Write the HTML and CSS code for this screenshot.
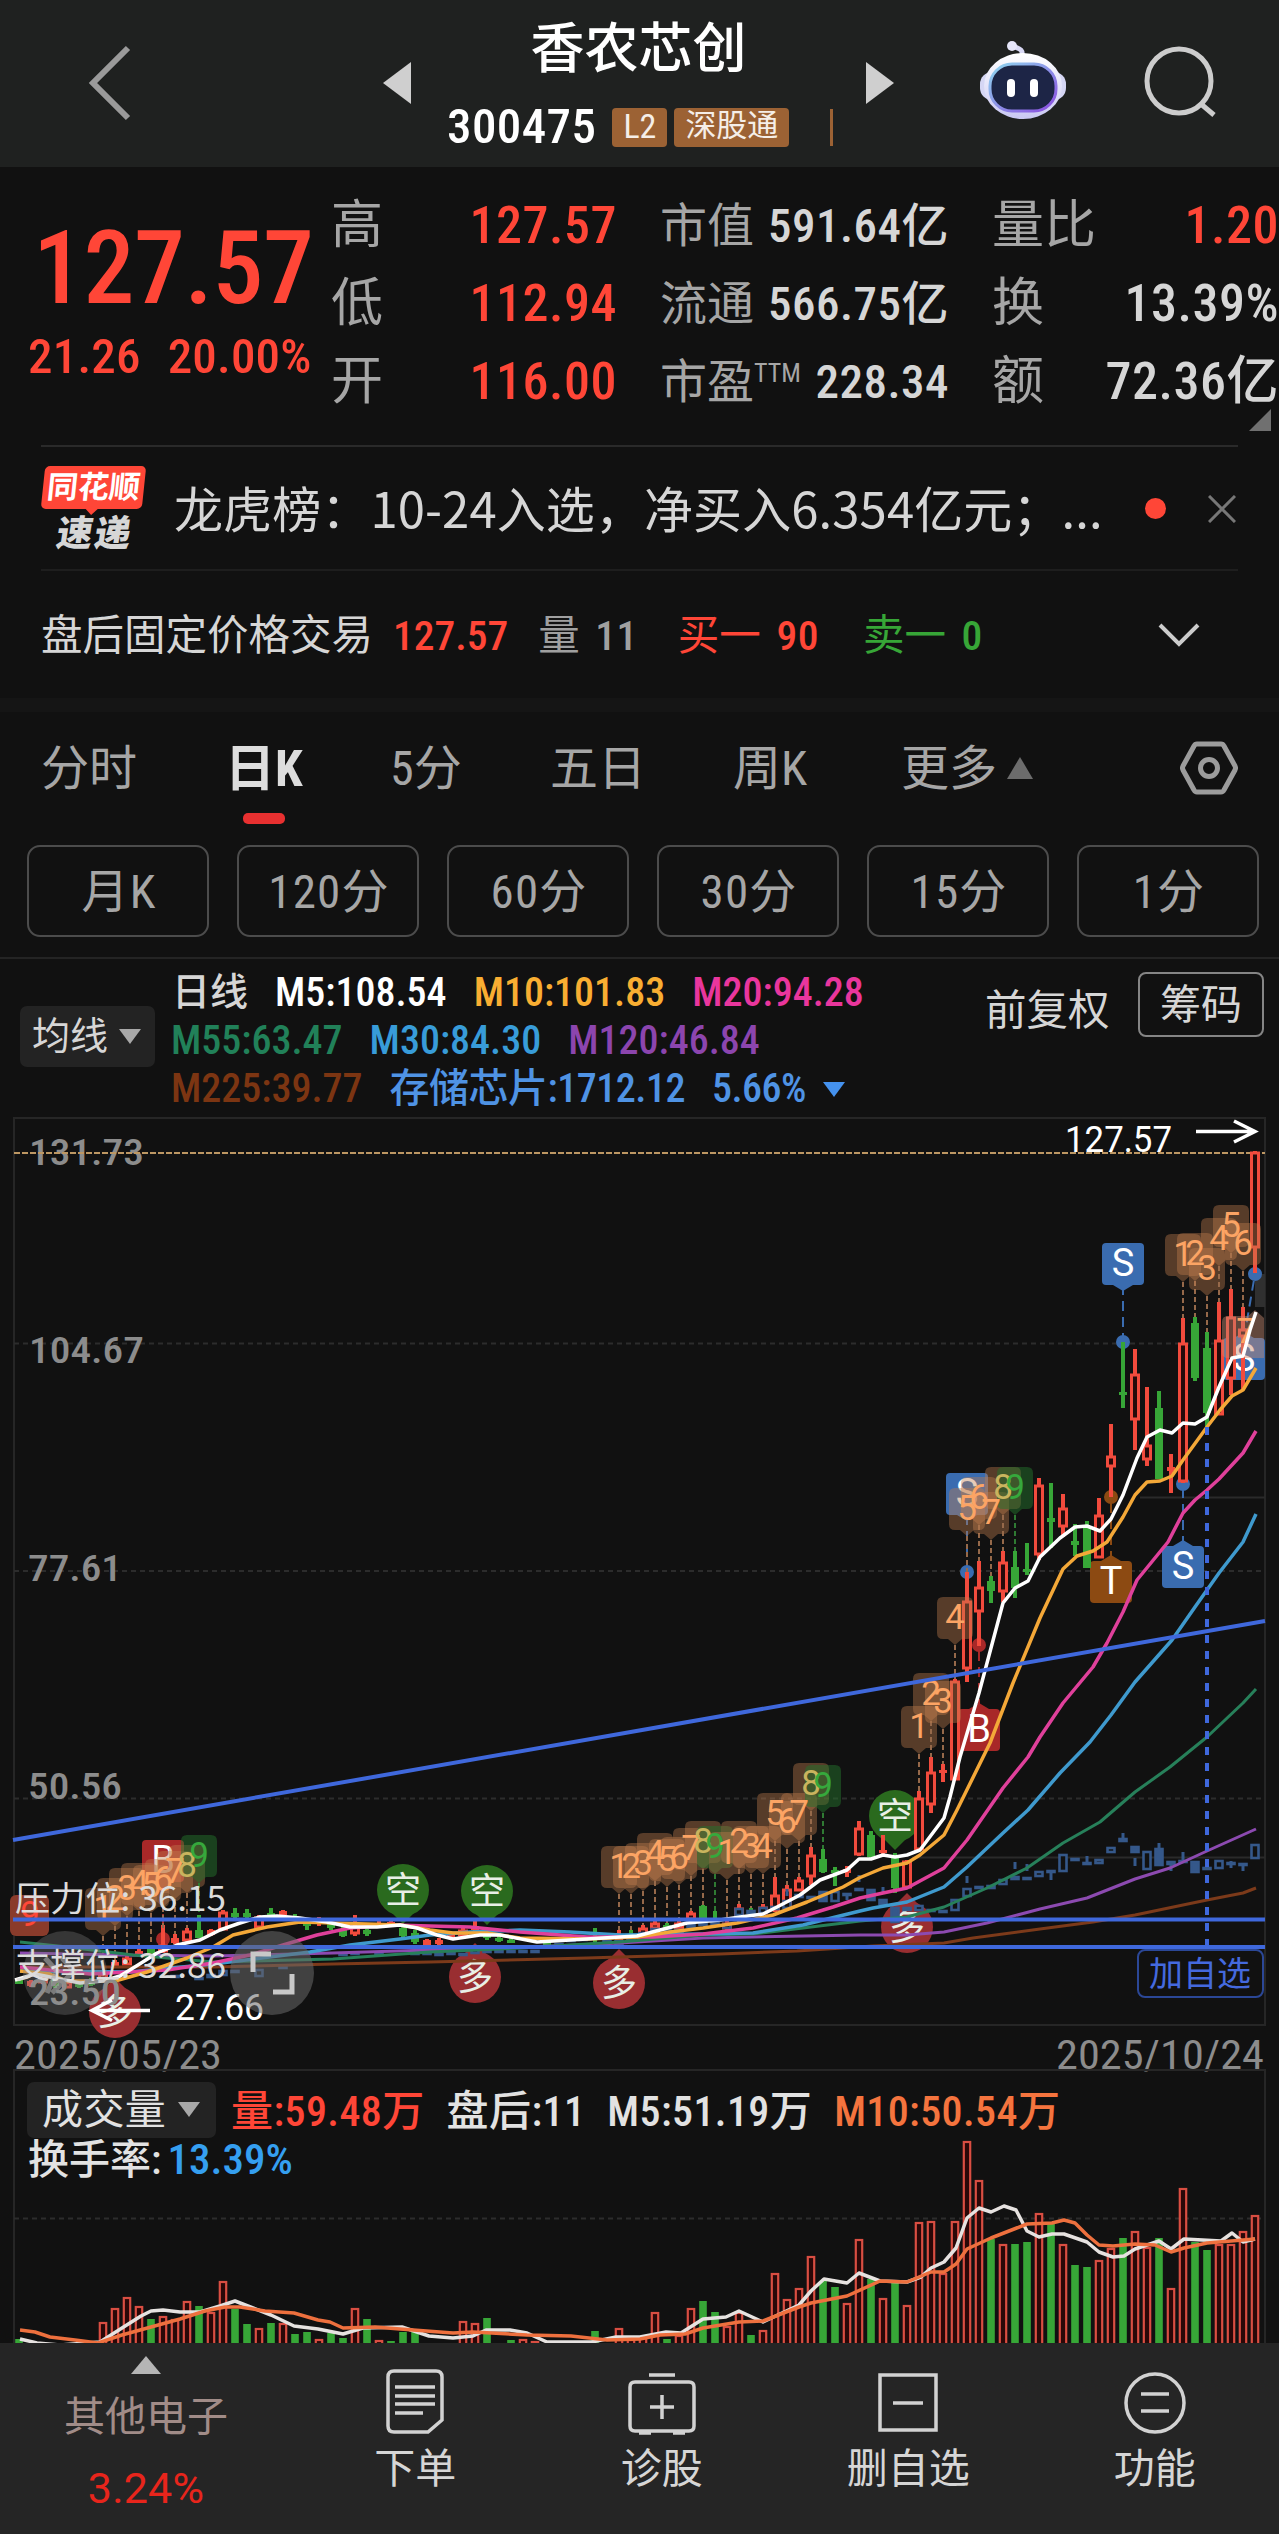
FILE: index.html
```html
<!DOCTYPE html>
<html lang="zh-CN">
<head>
    <meta charset="UTF-8">
    <meta name="viewport" content="width=device-width, initial-scale=1.0">
    <title>香农芯创 300475</title>
    <link rel="stylesheet" href="styles.css">
</head>
<body>
    <header class="topbar">
        <svg class="back" width="44" height="76" viewBox="0 0 44 76"><path d="M40 3 5 38l35 35"/></svg>
        <svg class="arrow" width="28" height="42" viewBox="0 0 28 42"><path d="M28 0v42L0 21z"/></svg>
        <div class="stock">
            <h1>香农芯创</h1>
            <div class="code-row">
                <span class="code">300475</span>
                <span class="tag">L2</span>
                <span class="tag tag-wide">深股通</span>
                <span class="tag-cut"></span>
            </div>
        </div>
        <svg class="arrow arrow-right" width="28" height="42" viewBox="0 0 28 42"><path d="M0 0v42l28-21z"/></svg>
        <svg class="robot" width="86" height="80" viewBox="0 0 86 80">
            <defs>
                <linearGradient id="shell" x1="0" y1="0" x2="0" y2="1">
                    <stop offset="0" stop-color="#ffffff"/>
                    <stop offset="1" stop-color="#c9c8f3"/>
                </linearGradient>
                <linearGradient id="rim" x1="0" y1="0" x2="1" y2="1">
                    <stop offset="0" stop-color="#8fd8f0"/>
                    <stop offset="1" stop-color="#8a4be0"/>
                </linearGradient>
            </defs>
            <path d="M42 14c1-6-3-6-9-9" fill="none" stroke="#d9d9f5" stroke-width="5" stroke-linecap="round"/>
            <circle cx="32" cy="5" r="5" fill="#e6e6fa"/>
            <rect x="0" y="31" width="86" height="28" rx="12" fill="#d5d6f4"/>
            <ellipse cx="43" cy="45" rx="39" ry="33" fill="url(#shell)"/>
            <rect x="10" y="23" width="66" height="47" rx="22" fill="#1d2546" stroke="url(#rim)" stroke-width="3"/>
            <rect x="27" y="38" width="8" height="18" rx="4" fill="#fff"/>
            <rect x="50" y="38" width="8" height="18" rx="4" fill="#fff"/>
        </svg>
        <svg class="search" width="74" height="74" viewBox="0 0 74 74"><circle cx="35" cy="35" r="32"/><path d="m57 58 13 11"/></svg>
    </header>

    <section class="quote">
        <div class="price">
            <div class="last">127.57</div>
            <div class="change"><span>21.26</span><span>20.00%</span></div>
        </div>
        <dl class="col col-a">
            <dt>高</dt><dd class="up">127.57</dd>
            <dt>低</dt><dd class="up">112.94</dd>
            <dt>开</dt><dd class="up">116.00</dd>
        </dl>
        <dl class="col col-b">
            <dt>市值</dt><dd>591.64亿</dd>
            <dt>流通</dt><dd>566.75亿</dd>
            <dt>市盈<sup>TTM</sup></dt><dd>228.34</dd>
        </dl>
        <dl class="col col-c">
            <dt>量比</dt><dd class="up">1.20</dd>
            <dt>换</dt><dd>13.39%</dd>
            <dt>额</dt><dd>72.36亿</dd>
        </dl>
        <i class="corner"></i>
    </section>

    <section class="news">
        <div class="brand">
            <span class="bubble"><b>同花顺</b></span>
            <em>速递</em>
        </div>
        <p>龙虎榜：10-24入选，净买入6.354亿元；...</p>
        <i class="dot"></i>
        <svg class="close" width="28" height="28" viewBox="0 0 28 28"><path d="m1 1 26 26M27 1 1 27"/></svg>
    </section>

    <section class="after">
        <span class="after-name">盘后固定价格交易</span>
        <span class="up after-price">127.57</span>
        <span class="muted">量 <b>11</b></span>
        <span class="up">买一 <b>90</b></span>
        <span class="down">卖一 <b>0</b></span>
        <svg class="chevron" width="42" height="26" viewBox="0 0 42 26"><path d="m2 3 19 19L40 3"/></svg>
    </section>

    <nav class="tabs">
        <span class="t1">分时</span>
        <span class="t2 active">日K</span>
        <span class="t3">5分</span>
        <span class="t4">五日</span>
        <span class="t5">周K</span>
        <span class="t6">更多<i class="more"></i></span>
        <svg class="gear" width="58" height="54" viewBox="0 0 58 54"><path d="M17 3h24q2 0 3 2l11 20q1 2 0 4L44 49q-1 2-3 2H17q-2 0-3-2L3 29q-1-2 0-4L14 5q1-2 3-2z"/><circle cx="29" cy="27" r="8.500"/></svg>
    </nav>
    <div class="periods">
        <span>月K</span><span>120分</span><span>60分</span><span>30分</span><span>15分</span><span>1分</span>
    </div>

    <section class="legend">
        <div class="select">均线<i></i></div>
        <div class="ma">
            <div><span class="c-txt">日线</span><span class="c5">M5:108.54</span><span class="c10">M10:101.83</span><span class="c20">M20:94.28</span></div>
            <div><span class="c55">M55:63.47</span><span class="c30">M30:84.30</span><span class="c120">M120:46.84</span></div>
            <div><span class="c225">M225:39.77</span><span class="cidx">存储芯片:1712.12</span><span class="cidx">5.66%</span><i class="down-tri"></i></div>
        </div>
        <span class="adjust">前复权</span>
        <span class="chips">筹码</span>
    </section>

    <svg id="kline" class="kline" width="1279" height="959" viewBox="0 1110 1279 959"></svg>

    <section class="volume">
        <svg id="vol" class="vol-chart" width="1279" height="274" viewBox="0 2069 1279 274"></svg>
        <div class="vol-row">
            <span class="select vol-select">成交量<i></i></span>
            <span class="up">量:59.48万</span>
            <span>盘后:11</span>
            <span>M5:51.19万</span>
            <span class="cv10">M10:50.54万</span>
        </div>
        <div class="turnover">换手率:<span>13.39%</span></div>
    </section>

    <footer class="bottom">
        <div class="sector">
            <i></i>
            <span>其他电子</span>
            <b>3.24%</b>
        </div>
        <div class="item">
            <svg width="60" height="66" viewBox="0 0 60 66"><path d="M9 2h42q6 0 6 6v43L43 63H9q-6 0-6-6V8q0-6 6-6zM10 18h40M10 27h40M10 35h40M10 44h28"/></svg>
            <span>下单</span>
        </div>
        <div class="item">
            <svg width="70" height="66" viewBox="0 0 70 66"><path d="M8 13h54q5 0 5 5v39q0 5-5 5H8q-5 0-5-5V18q0-5 5-5zM22 6h26M35 26v24M23 38h24M12 64h12M46 64h12"/></svg>
            <span>诊股</span>
        </div>
        <div class="item">
            <svg width="60" height="66" viewBox="0 0 60 66"><path d="M2 6h56v55H2zM15 34h30"/></svg>
            <span>删自选</span>
        </div>
        <div class="item">
            <svg width="62" height="66" viewBox="0 0 62 66"><circle cx="31" cy="34" r="29"/><path d="M17 25h28M17 42h28"/></svg>
            <span>功能</span>
        </div>
    </footer>

    <script src="chart.js"></script>
</body>
</html>
```
FILE: styles.css
```css
* {
    box-sizing: border-box;
}

body {
    margin: 0;
    background: #111111;
    color: #d6d6d6;
    font-family: "Roboto Condensed", "Noto Sans CJK SC", sans-serif;
    width: 1279px;
    height: 2534px;
    overflow: hidden;
}

svg {
    display: block;
    flex: none;
}

i, em {
    font-style: normal;
}

.up { color: #ff4637; }
.down { color: #37a637; }
.muted { color: #a0a0a0; }

/* top bar */
.topbar {
    height: 167px;
    background: #1f2120;
    display: flex;
    align-items: flex-start;
}

.back { margin: 45px 0 0 88px; fill: none; stroke: #9a9a9a; stroke-width: 6; }
.arrow { margin: 62px 0 0 251px; fill: #cfcfcf; }
.arrow-right { margin-left: 0; }

.stock {
    width: 455px;
    padding-top: 13px;
}

h1 {
    margin: 0;
    font-size: 54px;
    line-height: 74px;
    font-weight: 500;
    color: #ffffff;
    text-align: center;
}

.code-row {
    display: flex;
    align-items: center;
    height: 40px;
    margin-top: 20px;
    padding-left: 36px;
}

.code {
    font-size: 49px;
    line-height: 40px;
    font-weight: 500;
    color: #ffffff;
    margin-right: 16px;
    letter-spacing: .4px;
}

.tag {
    background: #9c6234;
    color: #f5eee8;
    font-size: 34px;
    line-height: 36px;
    height: 39px;
    padding: 0 11px;
    border-radius: 4px;
    margin-right: 7px;
}

.tag-wide { font-size: 31px; }

.tag-cut {
    width: 3px;
    height: 37px;
    margin-left: 34px;
    background: #9c6234;
}

.robot { margin: 41px 0 0 86px; }
.search { margin: 46px 0 0 78px; fill: none; stroke: #cccccc; stroke-width: 5; }

/* quote */
.quote {
    height: 278px;
    display: flex;
    position: relative;
    padding-top: 20px;
}

.price {
    width: 331px;
    color: #ff4637;
    padding-top: 25px;
    padding-left: 28px;
}

.last {
    font-size: 102px;
    line-height: 112px;
    font-weight: 500;
    padding-left: 5px;
    letter-spacing: -.5px;
}

.change {
    display: flex;
    gap: 27px;
    font-size: 49px;
    line-height: 66px;
    font-weight: 500;
    letter-spacing: .2px;
    white-space: nowrap;
}

.col {
    margin: 0;
    display: grid;
    grid-template-columns: 0 1fr;
    grid-auto-rows: 78px;
    font-size: 52px;
    line-height: 78px;
}

.col dt { color: #a6a6a6; white-space: nowrap; }
.col dd { margin: 0; text-align: right; letter-spacing: .5px; white-space: nowrap; }
.col-a { width: 286px; }
.col-b { width: 289px; margin-left: 43px; font-size: 47px; }
.col-c { width: 287px; margin-left: 43px; }

.col dd { font-weight: 500; }

.col sup {
    font-size: 26px;
    line-height: 0;
    vertical-align: 16px;
}

.corner {
    position: absolute;
    right: 8px;
    top: 242px;
    border: 11px solid transparent;
    border-right-color: #707070;
    border-bottom-color: #707070;
}

/* news strip */
.news {
    height: 126px;
    margin: 0 41px;
    display: flex;
    border-top: 2px solid #2a2a2a;
    border-bottom: 2px solid #1e1e1e;
}

.brand {
    flex: none;
    width: 106px;
    padding: 19px 0 0 2px;
    text-align: center;
}

.bubble {
    display: block;
    position: relative;
    width: 101px;
    height: 43px;
    border-radius: 5px;
    background: #ff4637;
    transform: skewX(-6deg);
    color: #ffffff;
    font-size: 31px;
    line-height: 43px;
}

.bubble::after {
    content: "";
    position: absolute;
    left: 44px;
    top: 42px;
    border: 7px solid transparent;
    border-top-color: #ff4637;
}

.brand em {
    display: block;
    font-size: 36px;
    line-height: 42px;
    margin-top: 4px;
    font-weight: 900;
    letter-spacing: 2px;
    transform: skewX(-9deg);
}

.news p {
    margin: 0;
    flex: none;
    width: 983px;
    padding-left: 27px;
    font-family: "Noto Sans CJK SC", sans-serif;
    font-size: 49px;
    line-height: 120px;
    letter-spacing: .1px;
    white-space: nowrap;
}

.dot {
    flex: none;
    width: 21px;
    height: 21px;
    border-radius: 50%;
    background: #ff4637;
    margin: 51px 0 0 15px;
}

.close { margin: 48px 0 0 42px; fill: none; stroke: #777777; stroke-width: 3; }

/* after-hours row */
.after {
    height: 127px;
    display: flex;
    padding: 0 79px 0 41px;
    font-size: 41.500px;
    line-height: 130px;
    white-space: pre;
}

.after b { font-weight: 500; letter-spacing: .5px; margin-left: 6px; }
.after-price { font-weight: 500; margin: 0 30px 0 20px; }
.after .muted { margin-right: 40px; }
.after .up b { margin-right: 44px; }
.chevron { margin: 51px 0 0 auto; fill: none; stroke: #cccccc; stroke-width: 4; }

/* period tabs */
.tabs {
    height: 147px;
    border-top: 14px solid #151515;
    display: flex;
    padding-left: 41px;
    font-size: 48px;
    line-height: 114px;
    color: #a6a6a6;
    white-space: nowrap;
}

.tabs .t1 { width: 184px; }
.tabs .t2 { width: 165px; }
.tabs .t3 { width: 160px; }
.tabs .t4 { width: 183px; }
.tabs .t5 { width: 168px; }
.tabs .t6 { width: 279px; display: flex; }

.tabs .active {
    color: #dddddd;
    font-weight: 700;
    font-size: 50px;
}

.tabs .active::after {
    content: "";
    display: block;
    width: 42px;
    height: 11px;
    margin: -13px 0 0 18px;
    border-radius: 5px;
    background: #e83030;
}

.more {
    border: 13px solid transparent;
    border-bottom: 22px solid #6c6c6c;
    border-top: 0;
    height: 0;
    margin: 45px 0 0 10px;
}

.gear { margin-top: 29px; fill: none; stroke: #9c9c9c; stroke-width: 5; }

.periods {
    display: grid;
    grid-template-columns: repeat(6, 182px);
    gap: 28px;
    padding: 0 0 20px 27px;
    border-bottom: 2px solid #242424;
}

.periods span {
    height: 92px;
    border: 2px solid #4c4c4c;
    border-radius: 13px;
    text-align: center;
    font-size: 47px;
    line-height: 89px;
    letter-spacing: 1.200px;
    color: #a6a6a6;
    padding-left: 2px;
}

/* moving average legend */
.legend {
    height: 151px;
    display: flex;
    padding-left: 20px;
    font-weight: 500;
}

.select {
    width: 135px;
    height: 61px;
    margin-top: 47px;
    padding-left: 12px;
    border-radius: 7px;
    background: #232323;
    font-size: 38px;
    font-weight: 400;
    line-height: 60px;
    display: flex;
}

.select i, .down-tri {
    height: 0;
    border: 11px solid transparent;
    border-top: 15px solid #a8a8a8;
    border-bottom: 0;
    margin: 23px 0 0 11px;
}

.ma {
    width: 812px;
    padding: 9px 0 0 16px;
}

.ma div {
    display: flex;
    gap: 27px;
    font-size: 40px;
    line-height: 49px;
    height: 48px;
    white-space: nowrap;
}

.ma .c-txt { font-size: 38px; margin-left: 1px; }
.c5 { color: #ffffff; }
.c10 { color: #f9ae32; }
.c20 { color: #e9369d; }
.c55 { color: #218159; }
.c30 { color: #389cd9; }
.c120 { color: #8c45ae; }
.c225 { color: #7c3512; }
.cidx { color: #4f93e4; letter-spacing: -.5px; }
.ma .down-tri { margin: 18px 0 0 -10px; border-top-color: #4592ee; }

.adjust {
    margin: 26px 0 0 18px;
    width: 153px;
    font-size: 41.500px;
    font-weight: 400;
    line-height: 51px;
}

.chips {
    width: 126px;
    height: 65px;
    margin-top: 13px;
    border: 2px solid #858585;
    border-radius: 8px;
    text-align: center;
    font-size: 41px;
    font-weight: 400;
    line-height: 63px;
}

/* charts */
.kline { overflow: visible; }
.kline text { white-space: pre; }
.axis { font-size: 36px; fill: #8c8c8c; font-weight: 500; }
.date { font-size: 40px; font-weight: 400; }
.mark { font-family: Roboto, "Noto Sans CJK SC", sans-serif; font-size: 36px; fill: #ffffff; }
.pick { font-size: 34px; fill: #4469de; }
.level { font-family: "Noto Sans CJK SC", sans-serif; font-size: 34px; fill: #dcdcdc; }
.num { font-family: Roboto, sans-serif; font-size: 35px; text-anchor: middle; }
.flag { font-family: Roboto, sans-serif; font-size: 38px; fill: #ffffff; text-anchor: middle; }
.pin { font-family: "Noto Sans CJK SC", sans-serif; font-size: 36px; fill: #e8efe6; text-anchor: middle; }

.volume {
    position: relative;
    height: 274px;
    overflow: hidden;
}

.vol-chart {
    position: absolute;
    left: 0;
    top: 0;
}

.vol-row {
    display: flex;
    gap: 22px;
    padding: 13px 0 0 27px;
    font-size: 42px;
    line-height: 59px;
    height: 69px;
    font-weight: 500;
    letter-spacing: .4px;
    color: #e2e2e2;
    white-space: nowrap;
    position: relative;
}

.vol-row .up { margin-left: -7px; }
.cv10 { color: #f5743e; }

.vol-select {
    margin: 0;
    width: 189px;
    height: 56px;
    padding-left: 15px;
    font-size: 41px;
    line-height: 57px;
}

.vol-select i { margin: 20px 0 0 12px; }

.turnover {
    position: relative;
    padding-left: 28px;
    font-size: 41px;
    line-height: 42px;
    font-weight: 500;
    color: #e2e2e2;
}

.turnover span { color: #359ff0; margin-left: 6px; font-size: 43px; }

/* bottom bar */
.bottom {
    height: 191px;
    background: #252525;
    display: flex;
    font-size: 41px;
}

.sector {
    width: 292px;
    display: flex;
    flex-direction: column;
    align-items: center;
    line-height: 71px;
}

.sector i {
    border: 15px solid transparent;
    border-top: 0;
    border-bottom: 18px solid #b5b5b5;
    margin-top: 13px;
}

.sector span { color: #a18c88; margin-top: 8px; }
.sector b { font-family: Roboto, sans-serif; font-size: 43px; font-weight: 400; color: #e8251c; letter-spacing: .2px; }

.item {
    width: 246.500px;
    display: flex;
    flex-direction: column;
    align-items: center;
    padding-top: 26px;
    line-height: 69px;
}

.item svg { fill: none; stroke: #d2d2d2; stroke-width: 3.500; }
```
FILE: chart.js
```js
const RED = '#f24b3d';
const GREEN = '#37a637';
const BLUE = '#35588a';
const x = i => 19 + i * 12;

const text = (cls, tx, ty, s, extra = '') => `<text class="${cls}" x="${tx}" y="${ty}" ${extra}>${s}</text>`;
const fit = w => `textLength="${w}" lengthAdjust="spacingAndGlyphs"`;
const line = (pts, color, w) => `<polyline points="${pts}" fill="none" stroke="${color}" stroke-width="${w}" stroke-linejoin="round"/>`;

// [index, up, high, body top, body bottom, low]
const candles = [
    [0,0,1980,1980,1984,1984],[1,1,1980,1981,1986,1987],[2,1,1976,1977,1983,1984],[3,0,1976,1979,1986,1988],
    [4,1,1980,1982,1988,1988],[5,0,1982,1984,1987,1988],[6,0,1978,1980,1985,1986],[7,1,1972,1974,1980,1981],
    [8,1,1960,1962,1967,1968],[9,1,1953,1958,1965,1965],[10,1,1949,1951,1956,1957],[11,0,1946,1948,1954,1955],
    [12,1,1925,1945,1952,1953],[13,1,1934,1938,1943,1944],[14,1,1928,1931,1941,1942],[15,0,1915,1930,1938,1938],
    [16,1,1929,1930,1935,1936],[17,1,1910,1912,1930,1930],[18,0,1908,1913,1917,1918],[19,0,1909,1913,1917,1918],
    [20,1,1915,1917,1928,1928],[21,0,1908,1913,1916,1917],[22,1,1910,1911,1915,1915],[23,0,1914,1916,1919,1920],
    [24,0,1922,1923,1926,1930],[25,1,1917,1919,1924,1926],[26,0,1919,1923,1928,1930],[27,0,1927,1930,1936,1937],
    [28,1,1915,1926,1934,1936],[29,0,1929,1930,1934,1936],[30,1,1921,1923,1926,1928],[31,1,1920,1922,1926,1927],
    [32,0,1927,1928,1936,1937],[33,0,1930,1933,1942,1944],[34,1,1939,1940,1945,1946],[35,1,1938,1940,1944,1945],
    [36,1,1932,1934,1938,1939],[37,1,1928,1930,1936,1937],[38,1,1921,1926,1930,1932],[39,0,1930,1935,1938,1940],
    [40,0,1936,1938,1940,1942],[41,0,1938,1940,1942,1943],[44,0,1939,1942,1944,1946],[48,0,1928,1936,1940,1943],
    [50,1,1930,1938,1943,1944],[51,0,1930,1934,1938,1940],[52,1,1925,1928,1935,1936],[53,1,1918,1923,1929,1930],
    [54,0,1923,1925,1928,1930],[55,1,1921,1923,1929,1930],[56,1,1911,1913,1920,1920],[57,0,1905,1906,1920,1920],
    [58,0,1911,1923,1926,1927],[59,1,1921,1923,1929,1930],[60,1,1904,1908,1916,1917],[61,0,1908,1911,1914,1915],
    [62,1,1904,1907,1914,1915],[63,1,1877,1895,1911,1912],[64,1,1885,1889,1906,1907],[65,1,1877,1880,1891,1891],
    [66,1,1847,1855,1877,1885],[67,0,1849,1859,1872,1873],[68,0,1867,1870,1873,1886],[69,1,1866,1869,1873,1877],
    [70,1,1821,1828,1855,1856],[71,0,1831,1835,1857,1858],[72,1,1835,1850,1853,1854],[73,0,1853,1857,1888,1893],
    [74,1,1860,1861,1888,1888],[75,1,1791,1798,1850,1850],[76,1,1757,1772,1805,1813],[77,1,1764,1770,1773,1782],
    [78,1,1679,1681,1780,1780],[79,1,1572,1601,1669,1682],[80,1,1561,1587,1612,1646],[81,0,1576,1581,1591,1603],
    [82,1,1551,1562,1592,1602],[83,0,1551,1567,1588,1598],[84,0,1543,1569,1572,1575],[85,1,1478,1485,1555,1560],
    [86,0,1483,1518,1522,1548],[87,1,1494,1508,1527,1537],[88,0,1524,1541,1545,1556],[89,0,1521,1528,1568,1568],
    [90,1,1498,1515,1558,1558],[91,1,1424,1456,1467,1497],[92,0,1342,1392,1395,1408],[93,1,1349,1374,1420,1450],
    [94,1,1387,1445,1460,1466],[95,0,1391,1408,1479,1479],[96,1,1454,1467,1471,1493],[97,1,1318,1343,1482,1483],
    [98,0,1317,1323,1378,1381],[99,0,1332,1348,1413,1427],[100,1,1302,1340,1415,1415],[101,1,1289,1317,1379,1395],
    [102,1,1307,1329,1337,1390],[103,1,1151,1152,1248,1273]
];

// sector index overlay: [index, top, bottom, filled]
const overlay = [
    [17,1970,1976],[20,1969,1977],[16,1974,1978],[22,1965,1969],[18,1970,1973],[15,1977,1980],[13,1975,1978],
    [27,1953,1955],[28,1952,1955],[30,1952,1954],[33,1950,1955],[34,1951,1955],[35,1953,1955],[36,1952,1955],
    [37,1953,1955],[38,1949,1954],[39,1950,1952],[40,1950,1952],[41,1950,1952],[42,1950,1952],[43,1950,1952],
    [45,1943,1945],[46,1939,1942],[47,1937,1941],[49,1940,1944],[50,1940,1945],[51,1937,1940],[52,1932,1937],
    [53,1928,1932],[54,1928,1930],[55,1929,1933],[56,1924,1928],[57,1922,1926],[58,1922,1926],[59,1923,1929],
    [60,1908,1916],[61,1910,1914],[62,1907,1914],[63,1906,1910],[64,1900,1909],[65,1894,1898],[66,1896,1899],
    [67,1891,1902,1],[68,1891,1902],[69,1893,1896],[70,1888,1891],[71,1889,1901,1],[72,1899,1905,1],[73,1907,1923,1],
    [74,1907,1911],[75,1905,1911],[76,1909,1911],[77,1910,1912],[78,1899,1911],[79,1888,1897],[80,1886,1889],
    [81,1885,1889],[82,1879,1885],[83,1876,1880],[84,1877,1879],[85,1871,1877],[86,1870,1873],[87,1854,1872],
    [88,1858,1860],[89,1862,1864],[90,1859,1864],[91,1847,1853],[92,1838,1842],[93,1846,1853,1],[94,1851,1870],
    [95,1848,1866,1],[96,1861,1865],[97,1860,1863],[98,1861,1873,1],[99,1867,1870],[100,1860,1869],[101,1862,1864],
    [102,1863,1865],[103,1844,1859]
];
const overlayWicks = [[64,1896],[69,1900],[70,1882],[72,1894],[79,1883],[83,1869],[84,1871],[86,1880],[89,1856],[92,1833],[93,1858],[95,1843],[96,1871],[97,1852],[99,1862],[101,1868],[102,1871]];

const averages = [
    ['#7c3a1a', 3, '20,1967 213,1967 333,1964 430,1962 587,1958 720,1954 797,1951 873,1946 944,1943 973,1938 1040,1929 1093,1922 1135,1915 1207,1900 1243,1893 1256,1888'],
    ['#8c4ab0', 3, '20,1953 120,1955 213,1956 333,1953 430,1950 553,1946 620,1943 703,1938 860,1935 907,1935 944,1932 987,1923 1040,1909 1087,1898 1135,1879 1170,1868 1207,1851 1256,1829'],
    ['#27805a', 3, '20,1942 67,1947 133,1955 213,1962 333,1959 430,1952 520,1948 620,1942 703,1935 753,1934 803,1928 860,1921 907,1917 944,1907 987,1888 1027,1868 1063,1843 1100,1822 1135,1792 1170,1767 1207,1737 1243,1703 1256,1689'],
    ['#3f9ace', 3.5, '20,1971 130,1972 213,1964 310,1952 350,1945 400,1939 430,1935 470,1932 520,1930 570,1932 620,1935 703,1934 753,1933 803,1925 860,1911 873,1908 907,1902 944,1887 967,1867 1003,1833 1028,1810 1060,1773 1090,1742 1111,1715 1135,1682 1172,1640 1195,1607 1219,1573 1243,1542 1256,1514'],
    ['#e0409b', 3.5, '20,1967 90,1974 167,1970 213,1963 250,1955 283,1945 317,1935 350,1928 393,1925 430,1926 470,1927 520,1932 587,1937 653,1937 703,1934 753,1928 797,1918 833,1907 860,1898 883,1893 907,1888 944,1868 967,1840 1003,1788 1028,1757 1040,1737 1063,1703 1093,1667 1107,1643 1123,1612 1137,1580 1168,1542 1183,1513 1195,1500 1207,1490 1219,1479 1243,1453 1256,1431'],
    ['#f4a838', 3.5, '20,1971 50,1974 67,1981 115,1981 147,1972 187,1958 213,1947 233,1935 267,1927 300,1922 400,1925 430,1930 453,1933 487,1933 520,1938 587,1939 637,1937 670,1932 703,1928 737,1923 773,1915 807,1902 843,1887 859,1878 883,1868 907,1863 920,1855 944,1835 957,1810 990,1743 1013,1683 1040,1618 1063,1569 1077,1556 1093,1551 1107,1542 1123,1517 1135,1495 1147,1482 1160,1481 1172,1476 1183,1460 1207,1427 1220,1410 1232,1396 1243,1390 1256,1368'],
    ['#ffffff', 3.5, '15,1980 35,1974 60,1979 80,1983 103,1981 120,1976 138,1965 157,1953 177,1945 200,1940 220,1930 240,1923 260,1917 277,1916 300,1918 327,1922 350,1927 377,1927 400,1925 417,1928 437,1935 453,1939 480,1935 500,1935 537,1942 570,1940 603,1938 637,1936 660,1930 687,1923 720,1920 740,1917 763,1914 777,1907 800,1895 820,1880 847,1870 859,1859 871,1859 883,1855 895,1857 907,1855 920,1850 944,1818 950,1797 960,1757 979,1693 1003,1603 1015,1588 1028,1581 1040,1557 1060,1538 1075,1527 1087,1526 1100,1531 1111,1519 1123,1495 1137,1458 1147,1437 1160,1430 1172,1433 1183,1423 1195,1424 1207,1417 1219,1387 1232,1358 1243,1356 1250,1330 1256,1312']
];

// [x, center y, digit, y where the dotted line ends]
const counts = [
    [103,1909,1,1972],[115,1899,2,1960],[127,1889,3,1953],[139,1884,4,1949],[151,1886,5,1946],[163,1880,6,1930],[175,1872,7,1934],[187,1866,8,1928],[199,1856,9,1915],
    [619,1867,1,1930],[631,1867,2,1930],[643,1864,3,1925],[655,1854,4,1918],[667,1860,5,1923],[679,1858,6,1921],[691,1849,7,1911],[703,1842,8,1905],[715,1847,9,1911],
    [727,1853,1,1921],[739,1842,2,1904],[751,1847,3,1908],[763,1847,4,1904],[775,1814,5,1877],[787,1822,6,1885],[799,1814,7,1877],[811,1784,8,1847],[823,1786,9,1849],
    [919,1727,1,1791],[931,1694,2,1757],[943,1702,3,1764],[955,1618,4,1679],[967,1509,5,1572],[979,1498,6,1561],[991,1513,7,1576],[1003,1488,8,1551],[1015,1488,9,1551],
    [1183,1255,1,1318],[1195,1254,2,1317],[1207,1269,3,1332],[1219,1239,4,1302],[1231,1226,5,1289],[1243,1244,6,1307]
];

// [x, y, letter, color, pointer direction, dot x, dot y]
const flags = [
    [1123,1264,'S','#3a6cb0',1,1123,1342],[1183,1567,'S','#3a6cb0',-1,1183,1484],[967,1494,'S','#3a6cb0',1,967,1572],
    [1244,1359,'S','#3a6cb0',-1,1255,1274],[1111,1582,'T','#8c4a12',-1,1111,1497],[979,1730,'B','#a82828',-1,979,1645],
    [163,1861,'B','#a82828',1,163,1939]
];

const pins = [[895,1816,'空',1],[487,1891,'空',1],[403,1890,'空',1],[475,1977,'多',-1],[619,1983,'多',-1],[907,1927,'多',-1],[115,2012,'多',-1]];

function drawCandle([i, up, high, top, bottom, low]) {
    const cx = x(i);
    const c = up ? RED : GREEN;
    let out = `<path d="M${cx} ${high}V${top}M${cx} ${bottom}V${low}" stroke="${c}" stroke-width="4"/>`;
    if (bottom - top < 6) {
        out += `<rect x="${cx - 4}" y="${top}" width="8" height="${Math.max(3, bottom - top)}" fill="${c}"/>`;
    } else if (up) {
        out += `<rect x="${cx - 3.5}" y="${top + 1}" width="7" height="${bottom - top - 2}" fill="#250a0a" stroke="${c}" stroke-width="3"/>`;
    } else {
        out += `<rect x="${cx - 4}" y="${top}" width="8" height="${bottom - top}" fill="${c}"/>`;
    }
    return out;
}

function drawOverlay([i, top, bottom, filled]) {
    return `<rect x="${x(i) - 3.5}" y="${top + 1}" width="7" height="${Math.max(1, bottom - top - 2)}" fill="${filled ? BLUE : '#111'}" stroke="${BLUE}" stroke-width="2.600"/>`;
}

function drawCountBox([cx, cy, n, end]) {
    const nine = n === 9;
    return `<path d="M${cx} ${cy + 27}V${end}" stroke="${nine ? '#2f7a33' : '#96694a'}" stroke-width="2" stroke-dasharray="5 3"/>
        <path d="M${cx - 12} ${cy - 21}h24q6 0 6 6v30q0 6-6 6h-5l-7 6-7-6h-5q-6 0-6-6v-30q0-6 6-6z" fill="${nine ? '#24712b' : '#c07e4e'}" fill-opacity="${nine ? .5 : .4}"/>`;
}

function drawCountNum([cx, cy, n]) {
    const c = n === 9 ? '#36a83c' : n === 8 ? '#c9b45e' : '#fca464';
    return text('num', cx, cy + 11, n, `fill="${c}"`);
}

function drawFlag([cx, cy, s, c, dir, dx, dy]) {
    const edge = cy + dir * 21;
    return `<path d="M${cx} ${edge}L${dx} ${dy}" stroke="${c}" stroke-width="2" stroke-dasharray="10 6"/>
        <circle cx="${dx}" cy="${dy}" r="7" fill="${c}"/>
        <rect x="${cx - 21}" y="${cy - 21}" width="42" height="42" rx="4" fill="${c}"/>
        <path d="M${cx - 10} ${edge}h20l-10 ${dir * 6}z" fill="${c}"/>` + text('flag', cx, cy + 12, s);
}

function drawPin([cx, cy, s, dir]) {
    const c = dir > 0 ? '#2a6a1e' : '#992e31';
    return `<circle cx="${cx}" cy="${cy}" r="26" fill="${c}"/>
        <path d="M${cx - 12} ${cy + dir * 22}h24l-12 ${dir * 12}z" fill="${c}"/>` + text('pin', cx, cy + 13, s);
}

let svg = '<g fill="none" stroke="#262626" stroke-width="2"><path d="M14 2025V1118H1265V2025z"/>';
svg += '<path d="M14 1343.500H1265M14 1571H1265M14 1798.500H1265" stroke="#2c2c2c" stroke-dasharray="5 4"/>';
svg += '<path d="M1140 1497.500H1265M912 1857.500H1265" stroke="#2a2a2a"/></g>';
svg += '<rect x="1255" y="1274" width="10" height="33" fill="#303030"/>';
svg += text('axis', 29, 1165, '131.73', fit(115)) + text('axis', 29, 1363, '104.67', fit(115));
svg += text('axis', 28, 1581, '77.61', fit(94)) + text('axis', 28, 1799, '50.56', fit(94));
svg += '<path d="M14 1153H1265" stroke="#bd9763" stroke-width="2" stroke-dasharray="6 2"/>';
svg += flags.map(drawFlag).join('') + pins.map(drawPin).join('');
svg += '<rect x="10" y="1895" width="39" height="41" rx="6" fill="#8a3b2b"/>' + text('num', 30, 1926, '9', 'fill="#ff4838"');
svg += candles.map(drawCandle).join('') + overlay.map(drawOverlay).join('');
svg += overlayWicks.map(([i, y]) => `<path d="M${x(i)} ${y}V${y < 1865 ? y + 8 : y - 7}" stroke="${BLUE}" stroke-width="3"/>`).join('');
svg += '<path d="M1228 1316h20l7-6 9 8v40h-36q-6 0-6-6v-30q0-6 6-6z" fill="#c58a70" fill-opacity=".45"/>' + text('num', 1246, 1343, '7', 'fill="#fca464"');
svg += counts.map(drawCountBox).join('') + counts.map(drawCountNum).join('');
svg += averages.map(([c, w, pts]) => line(pts, c, w)).join('');
svg += '<path d="M1207 1427V1947" stroke="#3f68dc" stroke-width="4" stroke-dasharray="8 8"/>';
svg += '<path d="M13 1840 1265 1621M13 1919.500H1265M13 1947H1265" stroke="#3f68dc" stroke-width="4"/>';

// floating round buttons
svg += '<circle cx="65" cy="1973" r="42" fill="#7a7a7a" fill-opacity=".35"/>';
svg += '<path d="m45 1958 12 13-10 22M62 1958l12 13-22 22" fill="none" stroke="#aaa" stroke-opacity=".6" stroke-width="5"/>';
svg += text('axis', 29, 2005, '23.50', fit(92));

// high / low markers
svg += text('mark', 1065, 1152, '127.57', fit(107));
svg += '<path d="M1196 1131.500h58M1234 1121l21 10.500-21 10.500" fill="none" stroke="#fff" stroke-width="3.500"/>';
svg += text('mark', 175, 2020, '27.66', fit(89));
svg += '<path d="M150 2010.500H92M112 2000l-20 10.500 20 10" fill="none" stroke="#fff" stroke-width="3.500"/>';
svg += text('level', 15, 1911, '压力位: 36.15', fit(211)) + text('level', 15, 1978, '支撑位: 32.86', fit(211));

svg += '<circle cx="272" cy="1973" r="42" fill="#6a6a6a" fill-opacity=".55"/>';
svg += '<path d="M253 1972v-18h18M273 1992h19v-18" fill="none" stroke="#c8c8c8" stroke-width="5"/>';

svg += '<rect x="1138" y="1950" width="125" height="47" rx="7" fill="#111" stroke="#2b4796" stroke-width="2"/>';
svg += text('mark pick', 1149, 1986, '加自选');
svg += text('axis date', 14, 2069, '2025/05/23', fit(208)) + text('axis date', 1056, 2069, '2025/10/24', fit(208));
document.getElementById('kline').innerHTML = svg;

// volume: [index, up, top]
const volumes = [
    [0,0,2339],[7,1,2322],[8,1,2308],[9,1,2297],[10,1,2306],[11,0,2319],[12,1,2316],[13,1,2319],[14,1,2301],[15,0,2306],
    [16,1,2312],[17,1,2281],[18,0,2309],[19,0,2324],[20,1,2328],[21,0,2323],[22,1,2323],[23,0,2334],[24,0,2332],[25,1,2339],
    [26,0,2333],[27,0,2338],[28,1,2308],[29,0,2319],[30,1,2340],[31,0,2341],[32,0,2332],[33,0,2332],[37,1,2321],[38,1,2323],
    [39,0,2318],[41,0,2340],[42,1,2339],[43,1,2341],[48,0,2331],[50,1,2328],[51,1,2339],[52,1,2337],[53,1,2312],[54,0,2339],
    [55,1,2335],[56,1,2308],[57,0,2301],[58,0,2312],[59,1,2326],[60,1,2312],[61,0,2335],[62,1,2330],[63,1,2273],[64,1,2299],
    [65,1,2288],[66,1,2256],[67,0,2281],[68,0,2287],[69,1,2303],[70,1,2239],[71,0,2279],[72,1,2298],[73,0,2283],[74,1,2305],
    [75,1,2222],[76,1,2221],[77,1,2273],[78,1,2221],[79,1,2141],[80,1,2180],[81,0,2239],[82,1,2244],[83,0,2244],[84,0,2242],
    [85,1,2213],[86,0,2223],[87,1,2244],[88,0,2265],[89,0,2267],[90,1,2260],[91,1,2248],[92,0,2238],[93,1,2231],[94,1,2247],
    [95,0,2238],[96,1,2288],[97,1,2188],[98,0,2242],[99,0,2250],[100,1,2244],[101,1,2244],[102,1,2231],[103,1,2215]
];

let vol = '<path d="M14 2343V2070H1265V2343" fill="none" stroke="#262626" stroke-width="2"/>';
vol += '<path d="M14 2218.500H1265" stroke="#2c2c2c" stroke-width="2" stroke-dasharray="5 4"/>';
vol += volumes.map(([i, up, top]) => up
    ? `<rect x="${x(i) - 3.2}" y="${top + 1}" width="6.400" height="250" fill="#2a0808" stroke="#d94e42" stroke-width="2.200"/>`
    : `<rect x="${x(i) - 3.8}" y="${top}" width="7.600" height="250" fill="${GREEN}"/>`).join('');
vol += line('20,2339 37,2343 60,2345 100,2342 122,2328 141,2316 151,2311 163,2310 180,2312 200,2312 220,2306 235,2301 253,2308 271,2315 294,2326 318,2329 343,2334 363,2328 402,2327 429,2336 453,2338 473,2336 486,2330 510,2330 527,2333 547,2342 592,2342 616,2337 640,2337 666,2332 681,2333 703,2319 726,2317 739,2311 763,2322 799,2305 811,2291 824,2279 847,2283 859,2273 880,2281 907,2282 921,2277 931,2268 944,2262 956,2248 967,2218 979,2208 991,2212 1004,2206 1016,2210 1027,2231 1039,2237 1052,2234 1064,2234 1087,2242 1099,2252 1113,2257 1124,2256 1135,2249 1159,2241 1171,2249 1184,2239 1221,2241 1232,2233 1243,2242 1255,2239', '#e6e2e0', 3.5);
vol += line('20,2330 35,2332 50,2337 75,2340 98,2343 122,2335 151,2327 180,2319 205,2311 225,2307 240,2307 265,2311 294,2313 318,2320 330,2322 343,2328 375,2327 400,2329 453,2333 473,2332 527,2335 571,2336 607,2340 640,2339 660,2335 685,2334 703,2328 739,2322 763,2321 799,2307 811,2303 847,2296 880,2281 907,2282 931,2272 944,2272 956,2264 967,2249 991,2238 1027,2224 1052,2223 1064,2220 1075,2223 1087,2235 1099,2245 1113,2246 1135,2244 1155,2245 1171,2252 1184,2248 1207,2243 1255,2239', '#ee703e', 3.5);
document.getElementById('vol').innerHTML = vol;
```
